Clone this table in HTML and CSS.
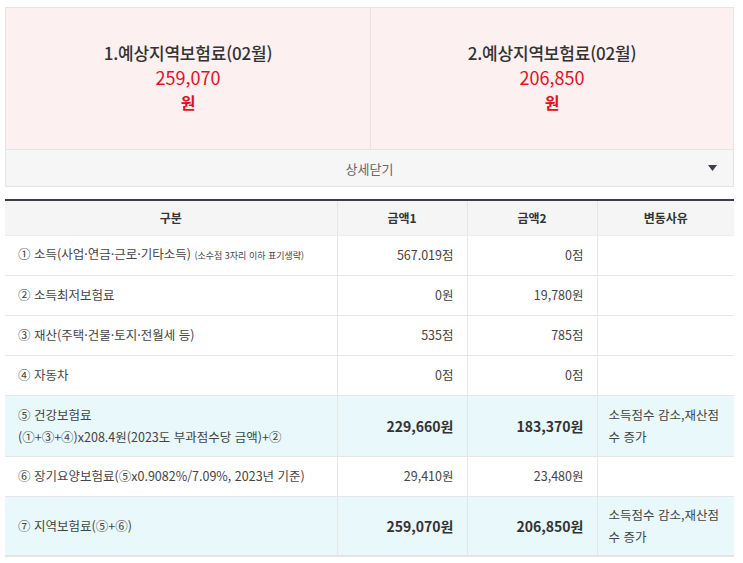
FILE: index.html
```html
<!DOCTYPE html>
<html lang="ko">
<head>
<meta charset="utf-8">
<link rel="stylesheet" href="styles.css">
</head>
<body>
<div class="wrap">
  <div class="summary">
    <div class="cards">
      <div class="card">
        <div class="card-title">1.예상지역보험료(02월)</div>
        <div class="card-num">259,070</div>
        <div class="card-unit">원</div>
      </div>
      <div class="card">
        <div class="card-title">2.예상지역보험료(02월)</div>
        <div class="card-num">206,850</div>
        <div class="card-unit">원</div>
      </div>
    </div>
    <div class="toggle">
      <span>상세닫기</span>
      <svg class="tri" width="9" height="6" viewBox="0 0 9 6"><polygon points="0,0 9,0 4.5,6" fill="#3e3e4a"/></svg>
    </div>
  </div>

  <table class="detail">
    <colgroup>
      <col class="c1"><col class="c2"><col class="c3"><col class="c4">
    </colgroup>
    <thead>
      <tr><th>구분</th><th>금액1</th><th>금액2</th><th>변동사유</th></tr>
    </thead>
    <tbody>
      <tr><td class="label">① 소득(사업·연금·근로·기타소득) <small>(소수점 3자리 이하 표기생략)</small></td><td class="num">567.019점</td><td class="num">0점</td><td></td></tr>
      <tr><td class="label">② 소득최저보험료</td><td class="num">0원</td><td class="num">19,780원</td><td></td></tr>
      <tr><td class="label">③ 재산(주택·건물·토지·전월세 등)</td><td class="num">535점</td><td class="num">785점</td><td></td></tr>
      <tr><td class="label">④ 자동차</td><td class="num">0점</td><td class="num">0점</td><td></td></tr>
      <tr class="hl tall"><td class="label">⑤ 건강보험료<br>(①+③+④)x208.4원(2023도 부과점수당 금액)+②</td><td class="num strong">229,660원</td><td class="num strong">183,370원</td><td class="reason">소득점수 감소,재산점<br>수 증가</td></tr>
      <tr><td class="label">⑥ 장기요양보험료(⑤x0.9082%/7.09%, 2023년 기준)</td><td class="num">29,410원</td><td class="num">23,480원</td><td></td></tr>
      <tr class="hl tall last"><td class="label">⑦ 지역보험료(⑤+⑥)</td><td class="num strong">259,070원</td><td class="num strong">206,850원</td><td class="reason">소득점수 감소,재산점<br>수 증가</td></tr>
    </tbody>
  </table>
</div>
</body>
</html>
```

FILE: styles.css
```css
* { box-sizing: border-box; }
html, body { margin: 0; padding: 0; background: #fff; }
body {
  font-family: "Noto Sans CJK KR", "Noto Sans", sans-serif;
  color: #444;
}
.wrap { padding: 7px 9px 0 5px; }

.summary { border: 1px solid #e4e4e4; }
.cards {
  display: grid;
  grid-template-columns: 364px 1fr;
  background: #fdf0f1;
  border-bottom: 1px solid #e4e4e4;
  height: 142px;
}
.card {
  display: flex;
  flex-direction: column;
  align-items: center;
  justify-content: center;
  padding-bottom: 2px;
}
.card + .card { border-left: 1px solid #ece0e1; }
.card-title { font-size: 17px; line-height: 25px; color: #333; font-weight: 500; letter-spacing: -0.2px; }
.card-num { font-size: 18px; line-height: 25px; color: #e0101f; }
.card-unit { font-size: 16px; line-height: 25px; color: #e0101f; font-weight: 700; }

.toggle {
  position: relative;
  height: 36px;
  background: #f6f6f6;
  display: flex;
  align-items: center;
  justify-content: center;
  font-size: 13px;
  color: #666;
}
.tri { position: absolute; right: 16px; top: 15px; }

.detail {
  margin-top: 12px;
  width: 729px;
  border-collapse: collapse;
  table-layout: fixed;
  border-top: 2px solid #3c3c4a;
  font-size: 12.5px;
}
.c1 { width: 332px; }
.c2 { width: 130px; }
.c3 { width: 130px; }
.c4 { width: 137px; }

.detail th {
  background: #f5f5f5;
  height: 35px;
  font-size: 12px;
  font-weight: 700;
  color: #333;
  border-left: 1px solid #e6e6e6;
  border-bottom: 1px solid #eeeeee;
  padding: 0;
}
.detail th:first-child, .detail td:first-child { border-left: none; }
.detail td {
  height: 40px;
  border-left: 1px solid #e6e6e6;
  border-bottom: 1px solid #e6e6e6;
  padding: 0 13px;
  line-height: 22px;
  color: #444;
}
.detail td.label { padding-left: 13px; }
.detail td.num { text-align: right; }
.detail td.strong { font-weight: 700; font-size: 14px; color: #333; }
.detail td.reason { padding-left: 11px; font-size: 12.5px; }
.detail small { font-size: 9px; }
.detail tr.hl td { background: #e8f8fb; }
.detail tr.tall td { height: 61px; }
.detail tr.last td { height: 60px; border-bottom: 2px solid #e4e4e4; }
```
